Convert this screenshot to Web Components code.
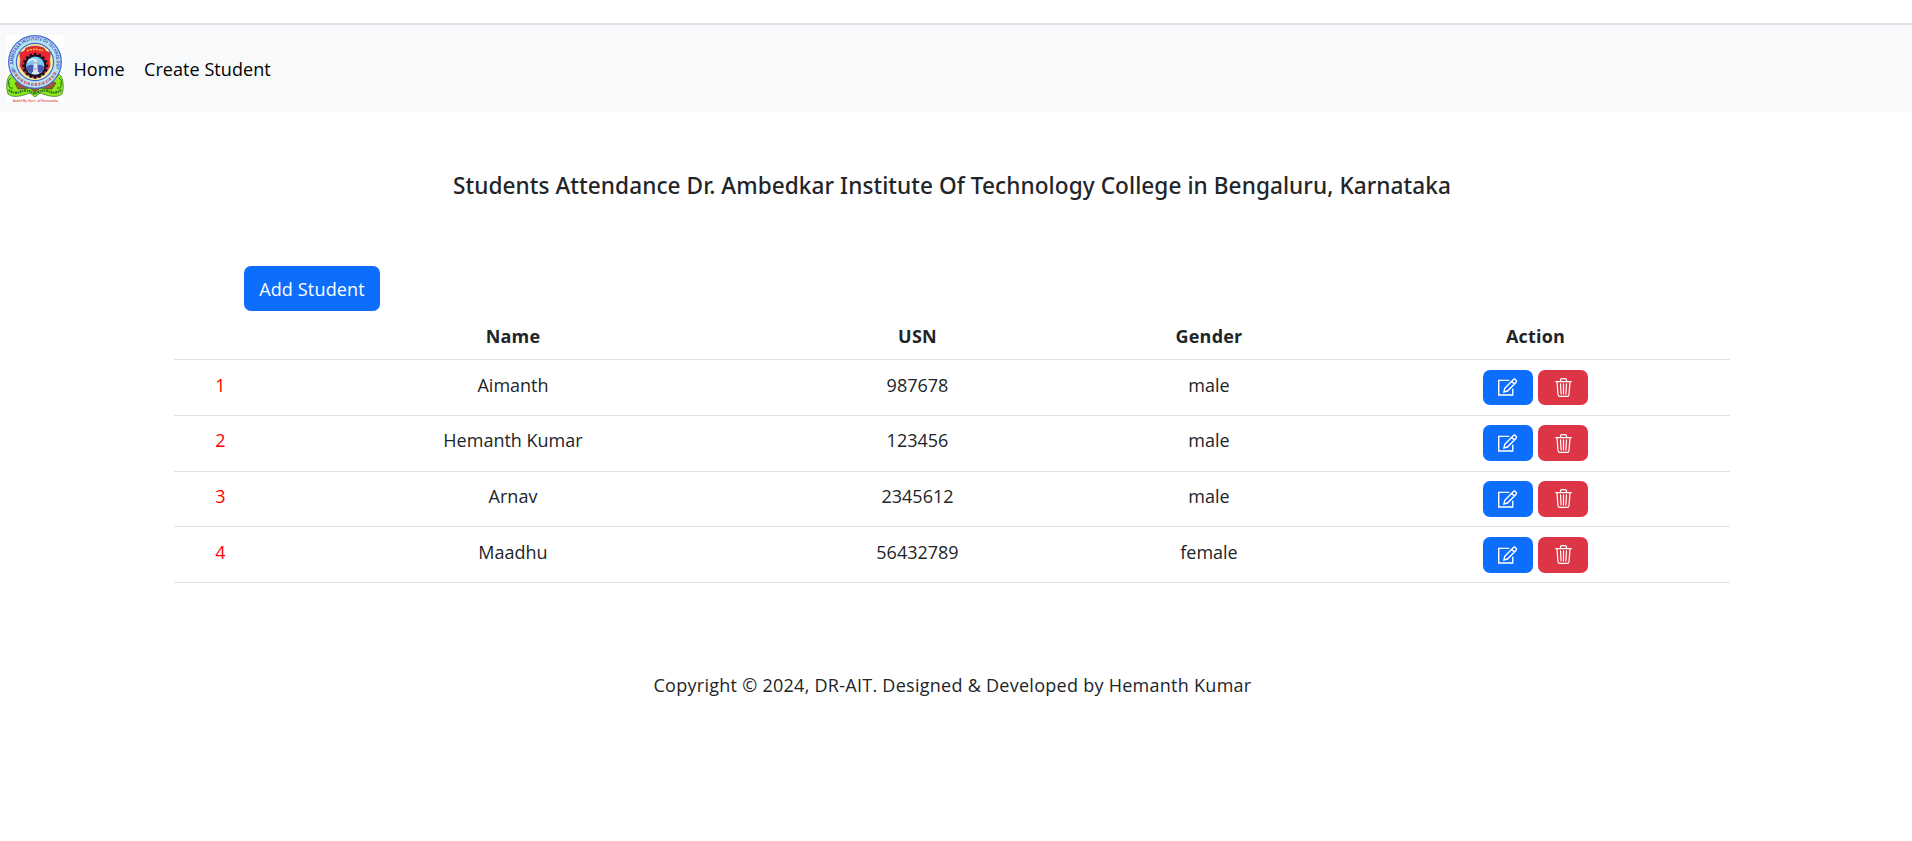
<!DOCTYPE html>
<html lang="en">
<head>
<meta charset="utf-8">
<title>Students Attendance</title>
<style>
  body { margin: 0; background: #fff; color: #212529; font: 18px/30px "Open Sans", "Noto Sans", sans-serif; }
</style>
</head>
<body>
<attendance-app></attendance-app>
<script>
const define = (name, html) => customElements.define(name, class extends HTMLElement {
  constructor() {
    super();
    const t = document.createElement('template');
    t.innerHTML = html;
    this.attachShadow({ mode: 'open' }).append(t.content.cloneNode(true));
  }
});

let teeth = '';
for (let i = 0; i < 16; i++) teeth += `<rect x="28" y="18" width="2.5" height="4" transform="rotate(${i * 22.5} 29.2 30.8)"/>`;

define('college-logo', `
<style>:host{display:block;width:58px;height:68px;background:#fff} svg{display:block;overflow:visible}</style>
<svg width="58" height="68" viewBox="0 0 58 68" font-family="Open Sans, sans-serif">
  <defs><path id="top" d="M9.4 36A21.6 21.6 0 1 1 48.6 36"/></defs>
  <path d="M5 39C0 42 0 54 2 59C8 64 18 60 24 58L29 62L34 58C40 60 50 64 56 59C58 54 58 42 53 39L47 46L11 46Z" fill="#8bea18" stroke="#467c34" stroke-width=".8"/>
  <path d="M9 48L25 44L29 50L34 44L50 48L46 54L34 53L29 57L24 53L12 54Z" fill="#9b5a30" stroke="#55491f" stroke-width=".8"/>
  <path d="M3 48Q2 54 7 53M55 48Q56 54 51 53M5 43Q1 45 3 49M53 43Q57 45 55 49" fill="none" stroke="#276b2f"/>
  <circle cx="29" cy="27" r="26.3" fill="#b9e6f4" stroke="#4b63d0" stroke-width="1.3"/>
  <circle cx="29" cy="27" r="18.6" fill="#f6f093" stroke="#4b60ce" stroke-width="1.2"/>
  <path d="M13.5 17Q18 18 20 13Q29 9 38 13Q40 18 44.5 17Q43 25 44 31Q40 41 29 43.6Q18 41 14 31Q15 25 13.5 17Z" fill="#ee2330" stroke="#7b3b67" stroke-width=".6"/>
  <path d="M21 15.7Q29 13 37 15.7" fill="none" stroke="#f7cf45" stroke-width="1.5" stroke-dasharray="2 1"/>
  <g fill="#141426">${teeth}<circle cx="29.2" cy="30.8" r="11"/></g>
  <circle cx="29.2" cy="30.8" r="9.2" fill="#7ccaf0"/>
  <path d="M20.2 32Q25 28 29 31Q34 28 38.2 32A9.2 9.2 0 0 1 20.2 32Z" fill="#4a5bb4"/>
  <path d="M22 27Q25 23 29 25" fill="none" stroke="#dff4fb" stroke-width="1.5"/>
  <path d="M28 24H31L32 37H33V39H26V37H27Z" fill="#dce1ee"/>
  <path d="M27 28H32M27 34H32" stroke="#8b91b5" stroke-width=".7"/>
  <text font-size="4.6" font-weight="700" fill="#3856c5"><textPath href="#top" textLength="84" lengthAdjust="spacingAndGlyphs">Dr. AMBEDKAR INSTITUTE OF TECHNOLOGY</textPath></text>
  <path d="M8 36A23 23 0 0 0 50 36" fill="none" stroke="#bf6a80" stroke-width="3" stroke-dasharray="1.6 .7 .8 .8 2.2 1.4"/>
  <path d="M3 55Q9 60 16 56Q22 54 29 59Q36 54 42 56Q49 60 55 55" fill="none" stroke="#367428" stroke-width="2.4" stroke-dasharray="1.2 .8 2 .7"/>
  <rect y="62.5" width="58" height="5.5" fill="#fff"/>
  <text x="7" y="67" font-size="4" font-weight="600" fill="#dc4a3a" textLength="45" lengthAdjust="spacingAndGlyphs">Aided By Govt. of Karnataka</text>
</svg>`);

define('nav-bar', `
<style>
  :host{display:flex;align-items:center;box-sizing:border-box;height:89px;margin-top:23px;padding:1px 0 0 6px;border-top:2px solid #dfe1e4;background:#f8f9fb;color:#000}
  nav{display:flex;gap:19.5px;margin-left:9.5px;letter-spacing:.05px}
</style>
<college-logo></college-logo><nav><slot></slot></nav>`);

define('primary-button', `
<style>
  :host{display:block}
  button{display:block;box-sizing:border-box;width:136px;height:45px;padding:1px 0 0;border:0;border-radius:7px;background:#0d6efd;color:#fff;font:inherit;letter-spacing:.15px}
</style><button><slot></slot></button>`);

define('row-actions', `
<style>
  :host{display:flex;justify-content:center;gap:5px}
  button{display:flex;align-items:center;justify-content:center;width:50px;height:35.6px;padding:0;border:0;border-radius:7px;background:#0d6efd}
  button+button{background:#dc3545}
  svg{display:block;fill:#fff}
  .edit{margin:1px 0 0 -1px;overflow:visible}.trash{margin:0 0 0 1px}
</style>
<button aria-label="Edit"><svg class="edit" width="19" height="19" viewBox="0 0 16 16"><path d="M5 11.8L5.7 8.7L13 1.2Q13.7.6 14.5 1.2L15.3 2Q16 2.8 15.3 3.5L8 11ZM11.5 2.8L13.8 5.1M9.5 2H.6V14.3H12.4V9" fill="none" stroke="#fff" stroke-width="1.2"/></svg></button>
<button aria-label="Delete"><svg class="trash" width="19" height="19" viewBox="0 0 16 16"><path d="M6.5 1h3a.5.5 0 0 1 .5.5v1H6v-1a.5.5 0 0 1 .5-.5M11 2.5v-1A1.5 1.5 0 0 0 9.5 0h-3A1.5 1.5 0 0 0 5 1.5v1H1.5a.5.5 0 0 0 0 1h.538l.853 10.66A2 2 0 0 0 4.885 16h6.23a2 2 0 0 0 1.994-1.84l.853-10.66h.538a.5.5 0 0 0 0-1zm1.958 1-.846 10.58a1 1 0 0 1-.997.92h-6.23a1 1 0 0 1-.997-.92L3.042 3.5zm-7.487 1a.5.5 0 0 1 .528.47l.5 8.5a.5.5 0 0 1-.998.06L5 5.03a.5.5 0 0 1 .47-.53Zm5.058 0a.5.5 0 0 1 .47.53l-.5 8.5a.5.5 0 1 1-.998-.06l.5-8.5a.5.5 0 0 1 .528-.47M8 4.5a.5.5 0 0 1 .5.5v8.5a.5.5 0 0 1-1 0V5a.5.5 0 0 1 .5-.5"/></svg></button>`);

define('student-row', `
<style>
  :host{display:grid;grid-template-columns:93px 492px 317px 266px 1fr;box-sizing:border-box;height:55.75px;padding-top:9.7px;border-bottom:1px solid #dee2e6;text-align:center}
  :host([head]){height:49px;padding-top:10px;font-weight:700;letter-spacing:.2px}
  ::slotted(.no){color:#f00}
  ::slotted(row-actions){margin-right:1px}
</style><slot></slot>`);

define('attendance-app', `
<style>
  :host{display:block}
  h1{margin:0;padding:59px 8px 0 0;font:500 22.6px/30px "Noto Sans",sans-serif;letter-spacing:.07px;text-align:center}
  main{width:1556px;margin-left:174px}
  primary-button{margin:65px 0 0 70px}
  footer{margin-top:87px;padding-right:7px;text-align:center;letter-spacing:.27px}
</style>
<nav-bar><span>Home</span><span>Create Student</span></nav-bar>
<h1>Students Attendance Dr. Ambedkar Institute Of Technology College in Bengaluru, Karnataka</h1>
<main>
  <primary-button>Add Student</primary-button>
  <student-row head><span></span><span>Name</span><span>USN</span><span>Gender</span><span style="margin-right:1px">Action</span></student-row>
  ${[['Aimanth', '987678', 'male'], ['Hemanth Kumar', '123456', 'male'], ['Arnav', '2345612', 'male'], ['Maadhu', '56432789', 'female']]
    .map((r, i) => `<student-row><span class="no">${i + 1}</span>${r.map(v => `<span>${v}</span>`).join('')}<row-actions></row-actions></student-row>`).join('')}
</main>
<footer>Copyright © 2024, DR-AIT. Designed &amp; Developed by Hemanth Kumar</footer>`);
</script>
</body>
</html>
